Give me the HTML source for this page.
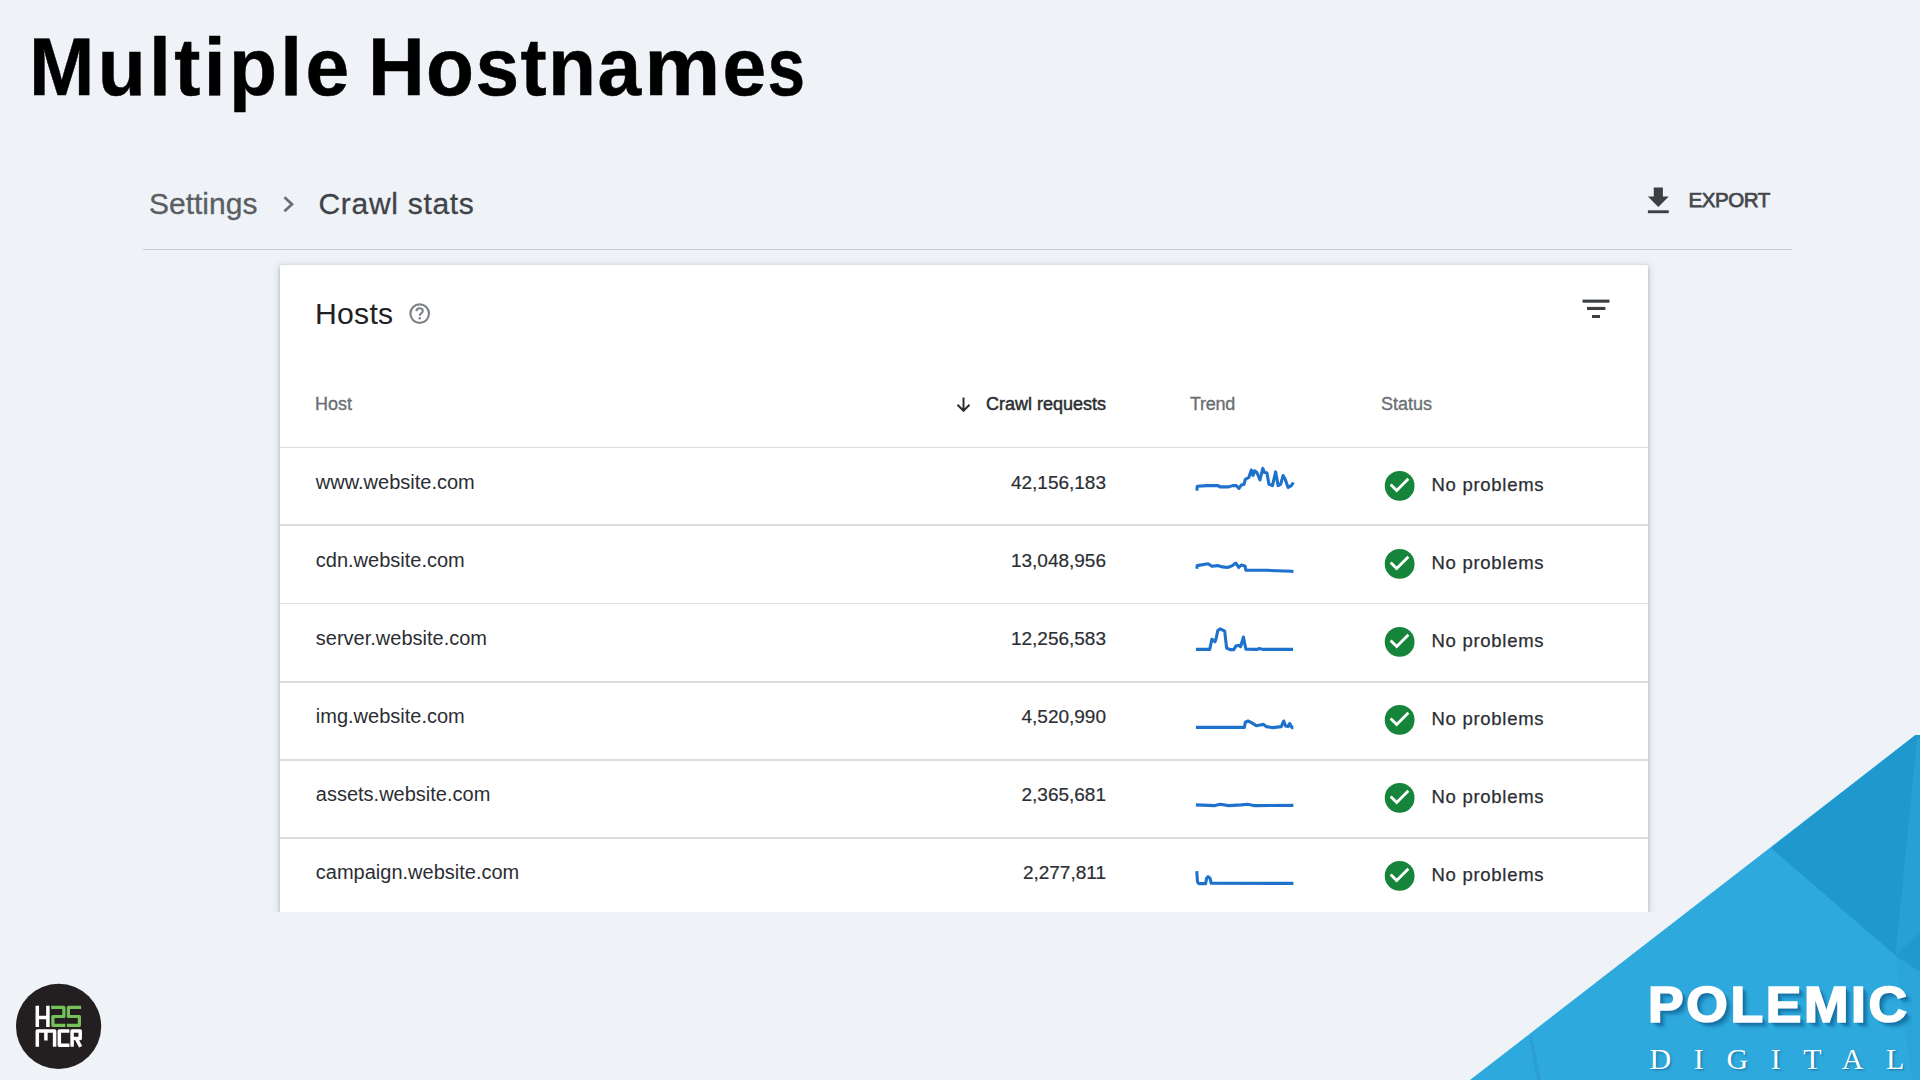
<!DOCTYPE html>
<html>
<head>
<meta charset="utf-8">
<title>Multiple Hostnames</title>
<style>
html,body{margin:0;padding:0;}
html{width:1920px;height:1080px;overflow:hidden;}
body{width:1920px;height:1080px;overflow:hidden;background:#eff3f8;font-family:"Liberation Sans",sans-serif;position:relative;}
.abs{position:absolute;white-space:nowrap;line-height:1;}
.tw{top:24.8px;font-size:83.5px;font-weight:bold;color:#000;transform:scale(0.94,0.982);transform-origin:0 70.75px;-webkit-text-stroke:0.5px #000;}
#bc1{left:149px;top:188.6px;font-size:30px;color:#5a5e63;-webkit-text-stroke:0.3px #5a5e63;}
#bc2{left:318.5px;top:188.6px;font-size:30px;color:#3f4347;letter-spacing:0.7px;-webkit-text-stroke:0.3px #3f4347;}
#divider{left:143px;top:249px;width:1649px;height:1px;background:#c9ccd2;}
#export{left:1688.4px;top:190.2px;font-size:20.5px;color:#44474b;letter-spacing:-0.4px;-webkit-text-stroke:0.75px #44474b;}
#card{left:280px;top:265px;width:1368px;height:647px;background:#fff;box-shadow:0 1.5px 3px rgba(60,64,67,.30), 0 1.5px 7px 1.5px rgba(60,66,100,.15);border-radius:2px 2px 0 0;}
#cardclip{left:0;top:250px;width:1920px;height:662px;overflow:hidden;}
.hline{position:absolute;left:280px;width:1368px;height:1.4px;background:#dcdddf;}
#hosts{left:314.9px;top:298.5px;font-size:30.2px;color:#202124;letter-spacing:0.27px;}
.th{position:absolute;white-space:nowrap;line-height:1;font-size:18px;color:#6a6f74;top:395px;-webkit-text-stroke:0.35px #6a6f74;}
.host{position:absolute;white-space:nowrap;line-height:1;font-size:20px;color:#2b2e33;left:315.8px;margin-top:0.3px;}
.num{position:absolute;white-space:nowrap;line-height:1;font-size:19px;color:#2b2e33;right:814px;text-align:right;-webkit-text-stroke:0.2px #2b2e33;}
.np{position:absolute;white-space:nowrap;line-height:1;font-size:18.5px;color:#2b2e33;left:1431.5px;letter-spacing:0.72px;-webkit-text-stroke:0.25px #2b2e33;}
.chk{position:absolute;left:1384px;width:31px;height:31px;}
.spark{position:absolute;left:1185px;width:120px;height:40px;}

#polemic{left:1648.4px;top:980px;font-size:49.5px;font-weight:bold;color:#fff;letter-spacing:2.4px;transform:scaleX(1.08);transform-origin:0 0;-webkit-text-stroke:1.7px #fff;text-shadow:1px 1px 1px rgba(20,105,155,.5),2px 2px 1px rgba(20,105,155,.45),3px 3px 1px rgba(20,105,155,.38),4px 4px 2px rgba(20,105,155,.3),5px 5px 2px rgba(20,105,155,.22),6px 6px 3px rgba(20,105,155,.15);}
#digital{width:270px;overflow:hidden;padding-bottom:6px;left:1649.6px;top:1044px;font-family:"Liberation Serif",serif;font-size:30px;color:#fff;letter-spacing:22.6px;text-shadow:1px 1px 1px rgba(22,110,160,.55),2px 2px 2px rgba(22,110,160,.35);}
</style>
</head>
<body>

<div id="t1" class="abs tw" style="left:29px;letter-spacing:3.6px">Multiple</div>
<div id="t2" class="abs tw" style="left:368px;letter-spacing:1.5px">Hostna<span style="display:inline-block;transform:scaleX(1.09);transform-origin:0 0;margin-left:2px;margin-right:7.5px">m</span>e<span style="display:inline-block;transform:scaleX(0.86);transform-origin:0 0;">s</span></div>

<div id="bc1" class="abs">Settings</div>
<svg class="abs" style="left:280px;top:194px" width="20" height="22" viewBox="0 0 20 22"><path d="M4.4 3.3 L12 10.3 L4.4 17.3" fill="none" stroke="#6a6e73" stroke-width="2.7"/></svg>
<div id="bc2" class="abs">Crawl stats</div>

<svg class="abs" style="left:1644px;top:184.7px" width="28" height="32" viewBox="0 0 28 32"><path d="M9.75 2.6 H18.9 V11.55 H24.75 L14.3 22 L3.9 11.55 H9.75 Z" fill="#3c4043"/><rect x="3.9" y="25.3" width="20.85" height="2.9" fill="#3c4043"/></svg>
<div id="export" class="abs">EXPORT</div>

<div id="divider" class="abs"></div>

<div id="cardclip" class="abs"><div id="card" class="abs" style="top:15px"></div></div>

<div id="hosts" class="abs">Hosts</div>
<svg class="abs" style="left:406px;top:300px" width="28" height="28" viewBox="0 0 28 28"><circle cx="13.7" cy="13.6" r="9.3" fill="none" stroke="#7d8388" stroke-width="2.2"/><path d="M10.5 11.3 C10.5 9.3 12 8.3 13.7 8.3 C15.5 8.3 16.8 9.4 16.8 11 C16.8 13.1 13.7 13.3 13.7 15.8" fill="none" stroke="#7d8388" stroke-width="2.1"/><rect x="12.55" y="17.1" width="2.3" height="2.3" fill="#7d8388"/></svg>

<svg class="abs" style="left:1580px;top:295px" width="32" height="28" viewBox="0 0 32 28"><rect x="2.5" y="4.6" width="27" height="3.1" fill="#3c4043"/><rect x="7" y="11.9" width="18.4" height="3.1" fill="#3c4043"/><rect x="12" y="20" width="8" height="3" fill="#3c4043"/></svg>

<div class="th" style="left:315px">Host</div>
<svg class="abs" style="left:954px;top:395px" width="20" height="20" viewBox="0 0 20 20"><path d="M9.5 2.5 V15.5 M3.5 9.8 L9.5 15.8 L15.5 9.8" fill="none" stroke="#2b2e33" stroke-width="2"/></svg>
<div class="th" style="right:814px;color:#2b2e33;-webkit-text-stroke:0.5px #2b2e33;">Crawl requests</div>
<div class="th" style="left:1190px;letter-spacing:-0.3px">Trend</div>
<div class="th" style="left:1381px">Status</div>

<div class="hline" style="top:446.85px;height:1.3px"></div>
<div class="hline" style="top:524.45px;height:1.7px"></div>
<div class="hline" style="top:602.65px;height:1.7px"></div>
<div class="hline" style="top:680.85px;height:1.7px"></div>
<div class="hline" style="top:759.25px;height:1.7px"></div>
<div class="hline" style="top:836.95px;height:1.7px"></div>

<div class="host" style="top:472px">www.website.com</div>
<div class="host" style="top:550px">cdn.website.com</div>
<div class="host" style="top:628px">server.website.com</div>
<div class="host" style="top:706px">img.website.com</div>
<div class="host" style="top:784px">assets.website.com</div>
<div class="host" style="top:862px">campaign.website.com</div>

<div class="num" style="top:473px">42,156,183</div>
<div class="num" style="top:551px">13,048,956</div>
<div class="num" style="top:629px">12,256,583</div>
<div class="num" style="top:707px">4,520,990</div>
<div class="num" style="top:785px">2,365,681</div>
<div class="num" style="top:863px">2,277,811</div>

<div class="np" style="top:476px">No problems</div>
<div class="np" style="top:554px">No problems</div>
<div class="np" style="top:632px">No problems</div>
<div class="np" style="top:710px">No problems</div>
<div class="np" style="top:788px">No problems</div>
<div class="np" style="top:866px">No problems</div>

<svg class="abs" style="left:0;top:0" width="1920" height="1080" viewBox="0 0 1920 1080">
<g fill="none" stroke="#1f72cb" stroke-width="3.1" stroke-linejoin="round">
<polyline points="1196.9,490.6 1197.2,486.3 1206.9,485.6 1218.1,485.6 1220,486.9 1228.8,486.9 1232.5,485.6 1236.3,485.6 1239,488.4 1241.3,485 1244,484.4 1245.3,479.4 1248.8,477.5 1251.3,470 1253,475.5 1254.6,470.8 1256.9,472.5 1260,480 1262.8,468.4 1264.4,472.5 1266.9,472.8 1269,484.4 1272.5,485.6 1275.6,471.9 1278.1,485.6 1280.6,484.4 1283.1,475.6 1285,478.75 1288.1,487.5 1291.3,485.6 1293.4,482.5"/>
<polyline points="1196.9,568.75 1197.2,565.6 1208.1,563.75 1211.9,566.25 1217.5,565.6 1222.5,566.9 1227.5,567.5 1232.5,565.6 1235.9,563.1 1238.8,567.5 1241.3,565 1245,565.9 1245.9,570.3 1266.3,570.3 1291.3,571.25 1293.4,571.6"/>
<polyline points="1195.9,649.4 1209.7,649.4 1211.9,639.25 1215,641.75 1216.25,638 1217.8,630.5 1220.3,628.9 1224.7,631.1 1226.6,648 1230,649.6 1233.75,649.6 1235.9,646.1 1238.75,645.2 1240.6,646.75 1243.4,637.1 1245.9,649.25 1256.9,649.4 1259.4,648.6 1263.1,649.4 1293.1,649.4"/>
<polyline points="1195.9,727.4 1244.4,727.4 1245.3,722.25 1248.1,721 1251.9,722.9 1256.25,725.7 1260,725 1263.4,724.4 1266.25,726.6 1272.5,727.6 1281.25,726.6 1283.75,721 1285.6,726 1288.1,726.6 1289.7,723.5 1291.9,727.6 1293.4,727.6"/>
<polyline points="1195.9,804.9 1215,805.6 1220,804.3 1228.75,805.6 1241.25,804.9 1247.5,804.3 1253.75,805.6 1293.4,805.4"/>
<polyline points="1196.75,871.1 1197.5,882 1199,883.6 1205.6,883.6 1206.6,878.25 1208.1,876.7 1210,878.25 1211.25,883.25 1293.4,883.4"/>
</g>
<g>
<circle cx="1399.65" cy="485.90" r="14.9" fill="#17843b"/><path transform="translate(1399.5,485.15) scale(1.41) translate(-12,-11.8)" d="M10 17l-5-5 1.41-1.41L10 14.17l7.59-7.59L19 8l-9 9z" fill="#fff"/>
<circle cx="1399.65" cy="563.90" r="14.9" fill="#17843b"/><path transform="translate(1399.5,563.15) scale(1.41) translate(-12,-11.8)" d="M10 17l-5-5 1.41-1.41L10 14.17l7.59-7.59L19 8l-9 9z" fill="#fff"/>
<circle cx="1399.65" cy="641.90" r="14.9" fill="#17843b"/><path transform="translate(1399.5,641.15) scale(1.41) translate(-12,-11.8)" d="M10 17l-5-5 1.41-1.41L10 14.17l7.59-7.59L19 8l-9 9z" fill="#fff"/>
<circle cx="1399.65" cy="719.90" r="14.9" fill="#17843b"/><path transform="translate(1399.5,719.15) scale(1.41) translate(-12,-11.8)" d="M10 17l-5-5 1.41-1.41L10 14.17l7.59-7.59L19 8l-9 9z" fill="#fff"/>
<circle cx="1399.65" cy="797.90" r="14.9" fill="#17843b"/><path transform="translate(1399.5,797.15) scale(1.41) translate(-12,-11.8)" d="M10 17l-5-5 1.41-1.41L10 14.17l7.59-7.59L19 8l-9 9z" fill="#fff"/>
<circle cx="1399.65" cy="875.90" r="14.9" fill="#17843b"/><path transform="translate(1399.5,875.15) scale(1.41) translate(-12,-11.8)" d="M10 17l-5-5 1.41-1.41L10 14.17l7.59-7.59L19 8l-9 9z" fill="#fff"/>
</g>
<polygon points="1470,1080 1915.5,735 1920,735 1920,1080" fill="#2ea9dd"/>
<polygon points="1771,848 1915.5,735 1920,735 1920,738 1917.5,738 1895.8,955.8" fill="#1e98cd"/>
<polygon points="1917.5,738 1920,738 1920,932 1895.8,955.8" fill="#27a0d5"/>
<polygon points="1895.8,955.8 1920,932 1920,972" fill="#2099ce"/>
<polygon points="1895.8,955.8 1920,972 1920,1080 1912,1080" fill="#2aa4d9"/>
<polygon points="1529,1037 1532,1036 1541,1080 1537,1080" fill="#2b9fd4"/>
<circle cx="58.6" cy="1026.4" r="42.6" fill="#231f20"/>
<g fill="none" stroke-width="3.5" stroke-linejoin="round" stroke-linecap="butt">
<path stroke="#fff" d="M37.3 1005.8V1026.9M47.9 1005.8V1026.9M37.3 1017.6H47.9"/>
<path stroke="#76c159" stroke-width="3.2" d="M51.2 1007.4H63.9V1016.5H52.9V1025.3H65.4M81.1 1007.4H68.4V1016.5H79.4V1025.3H66.9"/>
<path stroke="#fff" d="M37.3 1046.7V1030.9H54.6V1046.7M45.9 1030.9V1040.5M69.4 1030.9H59.3V1045.2H69.4M72.1 1046.7V1030.9H80.2V1038.5H72.1M76.3 1038.5L80.6 1046.7"/>
</g>
</svg>
<div id="polemic" class="abs">POLEMIC</div>
<div id="digital" class="abs">DIGITAL</div>

</body>
</html>
